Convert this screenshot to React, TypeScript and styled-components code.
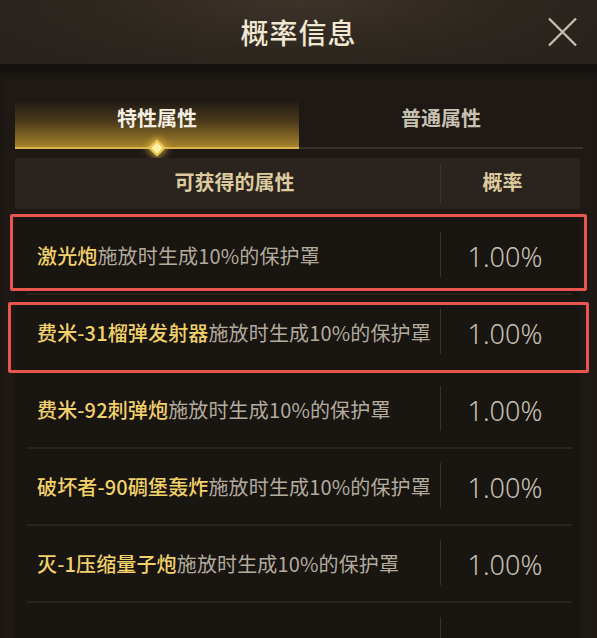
import React from 'react';
import styled, { createGlobalStyle } from 'styled-components';

const GlobalStyle = createGlobalStyle`
    html, body {
        margin: 0;
        padding: 0;
        background: #1d1814;
    }
    body {
        font-family: "Noto Sans CJK SC", "Noto Sans", sans-serif;
        width: 597px;
        height: 638px;
        overflow: hidden;
    }
`;

const Wrapper = styled.div`
    display: flex;
    flex-direction: column;
    width: 597px;
    height: 638px;
    overflow: hidden;
    background: #1e1915;
`;

const Header = styled.div`
    position: relative;
    display: flex;
    align-items: center;
    justify-content: center;
    height: 64px;
    flex-shrink: 0;
    background: radial-gradient(ellipse 60% 140% at 50% 0%, #3d3329 0%, #2e2720 55%, #29221c 100%);
    border-bottom: 4px solid #14100d;
`;

const Title = styled.h1`
    margin: 0;
    font-size: 28px;
    font-weight: 500;
    color: #f1e8d4;
    letter-spacing: 1px;
`;

const CloseButton = styled.button`
    position: absolute;
    right: 19px;
    top: 17px;
    width: 31px;
    height: 30px;
    padding: 0;
    border: none;
    background: transparent;
    color: #c4bdb2;
    cursor: pointer;
`;

const Panel = styled.div`
    flex: 1;
    display: flex;
    flex-direction: column;
    padding: 32px 14px 0 15px;
    border-left: 3px solid #29231d;
    margin-left: -3px;
    box-shadow: inset 0 8px 10px -6px #0d0a08;
`;

const Tabs = styled.div`
    display: flex;
    height: 49px;
    flex-shrink: 0;
`;

const Tab = styled.div<{ $active?: boolean }>`
    position: relative;
    flex: 1;
    display: flex;
    align-items: center;
    justify-content: center;
    padding-bottom: 12px;
    font-size: 20px;
    font-weight: ${p => (p.$active ? 700 : 600)};
    color: ${p => (p.$active ? '#f4efe4' : '#c9c1b2')};
    background: ${p =>
        p.$active
            ? 'linear-gradient(180deg, rgba(60, 46, 24, 0) 0%, rgba(104, 78, 30, 0.6) 45%, #a5822c 100%)'
            : 'transparent'};
    border-bottom: 2px solid ${p => (p.$active ? '#d9b54c' : '#38312a')};
`;

const Diamond = styled.span`
    position: absolute;
    left: 50%;
    bottom: -7px;
    width: 8px;
    height: 8px;
    margin-left: -6px;
    background: #fff0a8;
    border: 2px solid #e8c24a;
    transform: rotate(45deg);
    box-shadow: 0 0 7px 2px rgba(240, 196, 70, 0.7);
`;

const Table = styled.div`
    position: relative;
    display: flex;
    flex-direction: column;
    margin-top: 9px;
    margin-right: 3px;
`;

const HeadRow = styled.div`
    display: grid;
    grid-template-columns: 425px 1fr;
    height: 51px;
    background: #2a231e;
    border-radius: 2px;
`;

const HeadCell = styled.div<{ $divider?: boolean }>`
    display: flex;
    align-items: center;
    justify-content: center;
    padding-bottom: 4px;
    font-size: 20px;
    font-weight: 600;
    color: #dccb9f;
    border-left: ${p => (p.$divider ? '1px solid #3d352d' : 'none')};
    margin: ${p => (p.$divider ? '6px 0' : '0 0 0 14px')};
    padding-right: ${p => (p.$divider ? '16px' : '0')};
`;

const Rows = styled.div`
    display: flex;
    flex-direction: column;
    margin-top: 9px;
    background: #191511;
`;

const Row = styled.div`
    position: relative;
    display: grid;
    grid-template-columns: 425px 1fr;
    height: 77px;
    flex-shrink: 0;

    &::after {
        content: '';
        position: absolute;
        left: 12px;
        right: 8px;
        bottom: 0;
        height: 2px;
        background: #2a241f;
    }
`;

const AttrCell = styled.div`
    display: flex;
    align-items: center;
    padding-left: 22px;
    padding-bottom: 2px;
    font-size: 20px;
    letter-spacing: 0.15px;
    white-space: nowrap;
    color: #b3ab9e;
`;

const Name = styled.span`
    color: #f1d169;
    font-weight: 500;
`;

const RateCell = styled.div`
    position: relative;
    display: flex;
    align-items: center;
    justify-content: center;
    padding-right: 10px;
    font-family: "Noto Sans", sans-serif;
    font-size: 27px;
    font-weight: 300;
    color: #c7c0b4;

    &::before {
        content: '';
        position: absolute;
        left: 0;
        top: 14px;
        bottom: 18px;
        width: 1px;
        background: #3a322b;
    }
`;

const Highlight = styled.div`
    position: absolute;
    border: 3px solid #e9554f;
    border-radius: 2px;
    pointer-events: none;
`;

const CloseIcon = () => (
    <svg width="31" height="30" viewBox="0 0 31 30" fill="none">
        <path d="M2 1.5 L29 28.5 M29 1.5 L2 28.5" stroke="currentColor" strokeWidth="2.4" />
    </svg>
);

interface Attribute {
    name: string;
    effect: string;
    rate: string;
}

const ATTRIBUTES: Attribute[] = [
    { name: '激光炮', effect: '施放时生成10%的保护罩', rate: '1.00%' },
    { name: '费米-31榴弹发射器', effect: '施放时生成10%的保护罩', rate: '1.00%' },
    { name: '费米-92刺弹炮', effect: '施放时生成10%的保护罩', rate: '1.00%' },
    { name: '破坏者-90碉堡轰炸', effect: '施放时生成10%的保护罩', rate: '1.00%' },
    { name: '灭-1压缩量子炮', effect: '施放时生成10%的保护罩', rate: '1.00%' },
];

export default function App() {
    return (
        <>
            <GlobalStyle />
            <Wrapper>
                <Header>
                    <Title>概率信息</Title>
                    <CloseButton aria-label="关闭">
                        <CloseIcon />
                    </CloseButton>
                </Header>

                <Panel>
                    <Tabs>
                        <Tab $active>
                            特性属性
                            <Diamond />
                        </Tab>
                        <Tab>普通属性</Tab>
                    </Tabs>

                    <Table>
                        <HeadRow>
                            <HeadCell>可获得的属性</HeadCell>
                            <HeadCell $divider>概率</HeadCell>
                        </HeadRow>

                        <Rows>
                            {ATTRIBUTES.map(attr => (
                                <Row key={attr.name}>
                                    <AttrCell>
                                        <Name>{attr.name}</Name>
                                        {attr.effect}
                                    </AttrCell>
                                    <RateCell>{attr.rate}</RateCell>
                                </Row>
                            ))}
                            <Row>
                                <AttrCell />
                                <RateCell />
                            </Row>
                        </Rows>

                        {/* annotation boxes drawn over the first two rows */}
                        <Highlight style={{ left: -5, top: 56, width: 571, height: 71 }} />
                        <Highlight style={{ left: -7, top: 144, width: 575, height: 65 }} />
                    </Table>
                </Panel>
            </Wrapper>
        </>
    );
}
